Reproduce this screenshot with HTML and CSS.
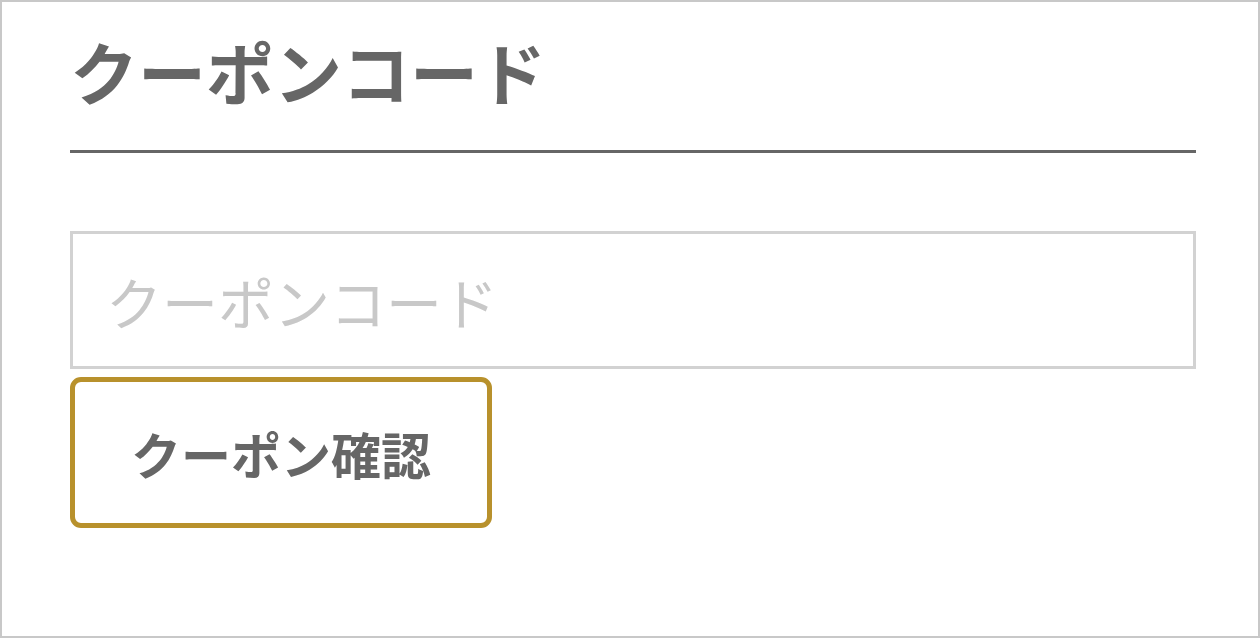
FILE: index.html
```html
<!DOCTYPE html>
<html lang="ja">
  <head>
    <meta charset="UTF-8" />
    <meta name="viewport" content="width=device-width, initial-scale=1.0" />
    <title>クーポンコード</title>
    <link rel="stylesheet" href="styles.css">
  </head>
  <body>
    <div class="coupon-panel">
      <h2 class="coupon-title">クーポンコード</h2>

      <form class="coupon-form" onsubmit="return false">
        <input
          type="text"
          id="coupon"
          name="coupon"
          class="coupon-input"
          placeholder="クーポンコード"
        />
        <button type="submit" class="coupon-button">クーポン確認</button>
      </form>
    </div>
  </body>
</html>
```

FILE: styles.css
```css
body {
  margin: 0;
  font-family: "Noto Sans CJK JP", "Noto Sans", sans-serif;
  background-color: white;
}
.coupon-panel {
  width: 1260px;
  height: 638px;
  box-sizing: border-box;
  border: 2px solid #c8c8c8;
  padding: 13px 62px 0 68px;
}
.coupon-title {
  margin: 0;
  padding-bottom: 23px;
  border-bottom: 3px solid #666;
  font-size: 68px;
  font-weight: bold;
  line-height: 112px;
  color: #666;
}
.coupon-form {
  display: flex;
  flex-direction: column;
  align-items: flex-start;
  gap: 8px;
  margin-top: 78px;
}
.coupon-input {
  width: 100%;
  height: 138px;
  box-sizing: border-box;
  padding: 0 33px;
  border: 3px solid #d2d2d2;
  font-family: inherit;
  font-size: 56px;
  color: #666;
  outline: none;
}
.coupon-input::placeholder {
  color: #c8c8c8;
}
.coupon-button {
  width: 422px;
  height: 151px;
  box-sizing: border-box;
  border: 5px solid #b8912c;
  border-radius: 11px;
  background-color: white;
  font-family: inherit;
  font-size: 50px;
  font-weight: bold;
  color: #666;
  cursor: pointer;
}
```
